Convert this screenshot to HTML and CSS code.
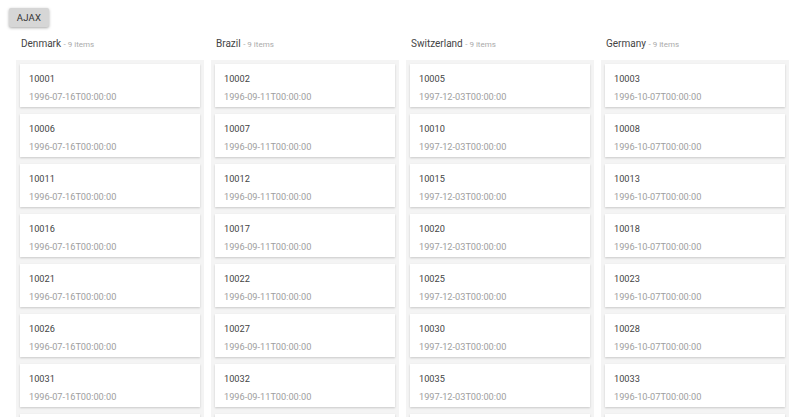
FILE: index.html
```html
<!DOCTYPE html>
<html>
<head>
<meta charset="utf-8">
<link rel="stylesheet" href="styles.css">
</head>
<body>
<div class="page">
  <button class="btn">AJAX</button>
  <div class="board">
    <div class="lane">
      <div class="lane-head">Denmark <span class="count">- 9 items</span></div>
      <div class="lane-body">
        <div class="card"><div class="id">10001</div><div class="date">1996-07-16T00:00:00</div></div>
        <div class="card"><div class="id">10006</div><div class="date">1996-07-16T00:00:00</div></div>
        <div class="card"><div class="id">10011</div><div class="date">1996-07-16T00:00:00</div></div>
        <div class="card"><div class="id">10016</div><div class="date">1996-07-16T00:00:00</div></div>
        <div class="card"><div class="id">10021</div><div class="date">1996-07-16T00:00:00</div></div>
        <div class="card"><div class="id">10026</div><div class="date">1996-07-16T00:00:00</div></div>
        <div class="card"><div class="id">10031</div><div class="date">1996-07-16T00:00:00</div></div>
        <div class="card"></div>
      </div>
    </div>
    <div class="lane">
      <div class="lane-head">Brazil <span class="count">- 9 items</span></div>
      <div class="lane-body">
        <div class="card"><div class="id">10002</div><div class="date">1996-09-11T00:00:00</div></div>
        <div class="card"><div class="id">10007</div><div class="date">1996-09-11T00:00:00</div></div>
        <div class="card"><div class="id">10012</div><div class="date">1996-09-11T00:00:00</div></div>
        <div class="card"><div class="id">10017</div><div class="date">1996-09-11T00:00:00</div></div>
        <div class="card"><div class="id">10022</div><div class="date">1996-09-11T00:00:00</div></div>
        <div class="card"><div class="id">10027</div><div class="date">1996-09-11T00:00:00</div></div>
        <div class="card"><div class="id">10032</div><div class="date">1996-09-11T00:00:00</div></div>
        <div class="card"></div>
      </div>
    </div>
    <div class="lane">
      <div class="lane-head">Switzerland <span class="count">- 9 items</span></div>
      <div class="lane-body">
        <div class="card"><div class="id">10005</div><div class="date">1997-12-03T00:00:00</div></div>
        <div class="card"><div class="id">10010</div><div class="date">1997-12-03T00:00:00</div></div>
        <div class="card"><div class="id">10015</div><div class="date">1997-12-03T00:00:00</div></div>
        <div class="card"><div class="id">10020</div><div class="date">1997-12-03T00:00:00</div></div>
        <div class="card"><div class="id">10025</div><div class="date">1997-12-03T00:00:00</div></div>
        <div class="card"><div class="id">10030</div><div class="date">1997-12-03T00:00:00</div></div>
        <div class="card"><div class="id">10035</div><div class="date">1997-12-03T00:00:00</div></div>
        <div class="card"></div>
      </div>
    </div>
    <div class="lane">
      <div class="lane-head">Germany <span class="count">- 9 items</span></div>
      <div class="lane-body">
        <div class="card"><div class="id">10003</div><div class="date">1996-10-07T00:00:00</div></div>
        <div class="card"><div class="id">10008</div><div class="date">1996-10-07T00:00:00</div></div>
        <div class="card"><div class="id">10013</div><div class="date">1996-10-07T00:00:00</div></div>
        <div class="card"><div class="id">10018</div><div class="date">1996-10-07T00:00:00</div></div>
        <div class="card"><div class="id">10023</div><div class="date">1996-10-07T00:00:00</div></div>
        <div class="card"><div class="id">10028</div><div class="date">1996-10-07T00:00:00</div></div>
        <div class="card"><div class="id">10033</div><div class="date">1996-10-07T00:00:00</div></div>
        <div class="card"></div>
      </div>
    </div>
  </div>
</div>
</body>
</html>
```
FILE: styles.css
```css
html, body {
  margin: 0;
  padding: 0;
  background: #ffffff;
  overflow: hidden;
}
body {
  font-family: Roboto, "Liberation Sans", sans-serif;
  color: #444;
}
.page {
  padding: 8px 0 0 9px;
  height: 409px;
  overflow: hidden;
}
.btn {
  display: block;
  width: 40px;
  height: 19px;
  padding: 0;
  border: none;
  border-radius: 2px;
  background: #d6d6d6;
  box-shadow: 0 1px 3px rgba(0,0,0,0.35);
  font-family: Roboto, "Liberation Sans", sans-serif;
  font-size: 9.5px;
  color: #333;
  letter-spacing: 0.3px;
}
.board {
  display: flex;
  gap: 7px;
  margin-left: 7px;
  margin-top: 8px;
}
.lane {
  width: 188px;
  flex: none;
}
.lane-head {
  height: 25px;
  padding-left: 5px;
  font-size: 10px;
  line-height: 18px;
  color: #444;
}
.count {
  font-size: 8px;
  color: #aaa;
}
.lane-body {
  background: #f4f4f4;
  padding: 4px 4px 0 4px;
  display: flex;
  flex-direction: column;
  gap: 7px;
}
.card {
  background: #fff;
  height: 43px;
  flex: none;
  box-sizing: border-box;
  padding: 9px 9px 0 9px;
  box-shadow: 0 1px 2px rgba(0,0,0,0.18);
  overflow: hidden;
}
.id {
  font-size: 9.2px;
  line-height: 12px;
  color: #444;
}
.date {
  margin-top: 6px;
  font-size: 9.2px;
  line-height: 12px;
  color: #9e9e9e;
}
```
